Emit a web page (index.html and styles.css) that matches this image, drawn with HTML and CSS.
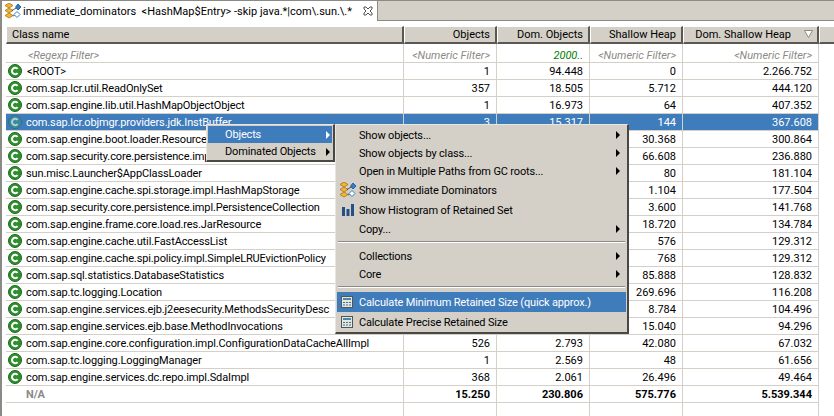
FILE: index.html
```html
<!DOCTYPE html>
<html lang="en">
<head>
  <meta charset="UTF-8" />
  <title>immediate_dominators</title>
  <link rel="stylesheet" href="styles.css">
</head>
<body>
  <svg class="defs" width="0" height="0">
    <symbol id="i-class" viewBox="0 0 14 14">
      <circle cx="7" cy="7" r="6.5" fill="#2f8f2f" stroke="#1d6b1d" stroke-width="1"/>
      <path d="M9.6 4.9A3.2 3.2 0 1 0 9.6 9.1" fill="none" stroke="#fff" stroke-width="2"/>
    </symbol>
    <symbol id="i-class-sel" viewBox="0 0 14 14">
      <circle cx="7" cy="7" r="6.5" fill="#3f8a9a" stroke="#2f6f86" stroke-width="1"/>
      <path d="M9.6 4.9A3.2 3.2 0 1 0 9.6 9.1" fill="none" stroke="#a9cfe0" stroke-width="2"/>
    </symbol>
    <symbol id="i-dominators" viewBox="0 0 18 16">
      <path d="M5 0l4 2.5-4 2.5-4-2.500z" fill="#f2b632" stroke="#a8741a" stroke-width=".8"/>
      <path d="M5 5l4 2.5-4 2.500-4-2.500z" fill="#f2b632" stroke="#a8741a" stroke-width=".8"/>
      <path d="M5 10l4 2.500-4 2.500-4-2.500z" fill="#f2b632" stroke="#a8741a" stroke-width=".8"/>
      <path d="M8 7.500L14 4M9 13l4-2" fill="none" stroke="#333" stroke-width=".8"/>
      <path d="M14 1l3 3-3 3-2.500-3z" fill="#2f7fd0" stroke="#1c4f8a" stroke-width=".8"/>
      <path d="M13 8.500l3 3-3 3-3-3z" fill="#fff" stroke="#2f7fd0" stroke-width="1"/>
    </symbol>
    <symbol id="i-histogram" viewBox="0 0 12 12">
      <path d="M0 3h3v9H0zM4.500 5h3v7h-3zM9 0h3v12H9z" fill="#254f86"/>
    </symbol>
    <symbol id="i-calc" viewBox="0 0 12 12">
      <rect x=".5" y=".5" width="11" height="11" fill="#e4e8dc" stroke="#555"/>
      <rect x="2" y="2" width="8" height="2" fill="#4f86b0"/>
      <path d="M2 6h2v1H2zM5 6h2v1H5zM8 6h2v1H8zM2 8.500h2v1H2zM5 8.500h2v1H5zM8 8.500h2v1H8z" fill="#3d6f99"/>
    </symbol>
  </svg>

  <div class="view">
    <!-- Editor tab -->
    <div class="tabbar">
      <div class="tab">
        <svg class="tab-icon"><use href="#i-dominators"/></svg>
        <span class="tab-title">immediate_dominators &nbsp;&lt;HashMap$Entry&gt; -skip java.*|com\.sun.\.*</span>
        <svg class="tab-close" viewBox="0 0 10 10"><path d="M1 1h2l2 2 2-2h2v2L7 5l2 2v2H7L5 7 3 9H1V7l2-2-2-2z" fill="#fff" stroke="#555"/></svg>
      </div>
    </div>

    <div class="table-pane">
      <table class="tree">
        <colgroup>
          <col class="c-name"><col class="c-num"><col class="c-num"><col class="c-num"><col class="c-last"><col>
        </colgroup>
        <thead>
          <tr>
            <th class="left">Class name</th>
            <th>Objects</th>
            <th>Dom. Objects</th>
            <th>Shallow Heap</th>
            <th class="sorted">Dom. Shallow Heap<svg class="sort" viewBox="0 0 9 8"><path d="M.5.500h8L4.500 7.500z" fill="#fff" stroke="#8c8a84"/></svg></th>
            <th class="filler"></th>
          </tr>
        </thead>
        <tbody>
          <tr class="filter">
            <td class="name regexp">&lt;Regexp Filter&gt;</td>
            <td>&lt;Numeric Filter&gt;</td>
            <td class="active">2000..</td>
            <td>&lt;Numeric Filter&gt;</td>
            <td>&lt;Numeric Filter&gt;</td>
            <td class="blank"></td>
          </tr>
          <tr><td class="name root"><svg class="ico"><use href="#i-class"/></svg>&lt;ROOT&gt;</td><td>1</td><td>94.448</td><td>0</td><td>2.266.752</td><td class="blank"></td></tr>
          <tr><td class="name"><svg class="ico"><use href="#i-class"/></svg>com.sap.lcr.util.ReadOnlySet</td><td>357</td><td>18.505</td><td>5.712</td><td>444.120</td><td class="blank"></td></tr>
          <tr><td class="name"><svg class="ico"><use href="#i-class"/></svg>com.sap.engine.lib.util.HashMapObjectObject</td><td>1</td><td>16.973</td><td>64</td><td>407.352</td><td class="blank"></td></tr>
          <tr class="selected"><td class="name"><svg class="ico"><use href="#i-class-sel"/></svg>com.sap.lcr.objmgr.providers.jdk.InstBuffer</td><td>3</td><td>15.317</td><td>144</td><td>367.608</td><td class="blank"></td></tr>
          <tr><td class="name"><svg class="ico"><use href="#i-class"/></svg>com.sap.engine.boot.loader.Resource</td><td></td><td></td><td>30.368</td><td>300.864</td><td class="blank"></td></tr>
          <tr><td class="name"><svg class="ico"><use href="#i-class"/></svg>com.sap.security.core.persistence.impl</td><td></td><td></td><td>66.608</td><td>236.880</td><td class="blank"></td></tr>
          <tr><td class="name"><svg class="ico"><use href="#i-class"/></svg>sun.misc.Launcher$AppClassLoader</td><td></td><td></td><td>80</td><td>181.104</td><td class="blank"></td></tr>
          <tr><td class="name"><svg class="ico"><use href="#i-class"/></svg>com.sap.engine.cache.spi.storage.impl.HashMapStorage</td><td></td><td></td><td>1.104</td><td>177.504</td><td class="blank"></td></tr>
          <tr><td class="name"><svg class="ico"><use href="#i-class"/></svg>com.sap.security.core.persistence.impl.PersistenceCollection</td><td></td><td></td><td>3.600</td><td>141.768</td><td class="blank"></td></tr>
          <tr><td class="name"><svg class="ico"><use href="#i-class"/></svg>com.sap.engine.frame.core.load.res.JarResource</td><td></td><td></td><td>18.720</td><td>134.784</td><td class="blank"></td></tr>
          <tr><td class="name"><svg class="ico"><use href="#i-class"/></svg>com.sap.engine.cache.util.FastAccessList</td><td></td><td></td><td>576</td><td>129.312</td><td class="blank"></td></tr>
          <tr><td class="name"><svg class="ico"><use href="#i-class"/></svg>com.sap.engine.cache.spi.policy.impl.SimpleLRUEvictionPolicy</td><td></td><td></td><td>768</td><td>129.312</td><td class="blank"></td></tr>
          <tr><td class="name"><svg class="ico"><use href="#i-class"/></svg>com.sap.sql.statistics.DatabaseStatistics</td><td></td><td></td><td>85.888</td><td>128.832</td><td class="blank"></td></tr>
          <tr><td class="name"><svg class="ico"><use href="#i-class"/></svg>com.sap.tc.logging.Location</td><td></td><td></td><td>269.696</td><td>116.208</td><td class="blank"></td></tr>
          <tr><td class="name"><svg class="ico"><use href="#i-class"/></svg>com.sap.engine.services.ejb.j2eesecurity.MethodsSecurityDesc</td><td></td><td></td><td>8.784</td><td>104.496</td><td class="blank"></td></tr>
          <tr><td class="name"><svg class="ico"><use href="#i-class"/></svg>com.sap.engine.services.ejb.base.MethodInvocations</td><td></td><td></td><td>15.040</td><td>94.296</td><td class="blank"></td></tr>
          <tr><td class="name"><svg class="ico"><use href="#i-class"/></svg>com.sap.engine.core.configuration.impl.ConfigurationDataCacheAllImpl</td><td>526</td><td>2.793</td><td>42.080</td><td>67.032</td><td class="blank"></td></tr>
          <tr><td class="name"><svg class="ico"><use href="#i-class"/></svg>com.sap.tc.logging.LoggingManager</td><td>1</td><td>2.569</td><td>48</td><td>61.656</td><td class="blank"></td></tr>
          <tr><td class="name"><svg class="ico"><use href="#i-class"/></svg>com.sap.engine.services.dc.repo.impl.SdaImpl</td><td>368</td><td>2.061</td><td>26.496</td><td>49.464</td><td class="blank"></td></tr>
          <tr class="total"><td class="name na">N/A</td><td>15.250</td><td>230.806</td><td>575.776</td><td>5.539.344</td><td class="blank"></td></tr>
          <tr class="empty"><td></td><td></td><td></td><td></td><td></td><td class="blank"></td></tr>
        </tbody>
      </table>
    </div>
  </div>

  <!-- Context menu and its submenu -->
  <div class="menu menu-root">
    <div class="item hot"><span>Objects</span><i class="arrow"></i></div>
    <div class="item"><span>Dominated Objects</span><i class="arrow"></i></div>
  </div>

  <div class="menu menu-sub">
    <div class="item"><span>Show objects...</span><i class="arrow"></i></div>
    <div class="item"><span>Show objects by class...</span><i class="arrow"></i></div>
    <div class="item"><span>Open in Multiple Paths from GC roots...</span><i class="arrow"></i></div>
    <div class="item tall"><svg class="mi mi-dom"><use href="#i-dominators"/></svg><span>Show immediate Dominators</span></div>
    <div class="item tall"><svg class="mi mi-hist"><use href="#i-histogram"/></svg><span>Show Histogram of Retained Set</span></div>
    <div class="item"><span>Copy...</span><i class="arrow"></i></div>
    <div class="sep"></div>
    <div class="item"><span>Collections</span><i class="arrow"></i></div>
    <div class="item"><span>Core</span><i class="arrow"></i></div>
    <div class="sep"></div>
    <div class="item tall hot"><svg class="mi mi-calc"><use href="#i-calc"/></svg><span>Calculate Minimum Retained Size (quick approx.)</span></div>
    <div class="item tall"><svg class="mi mi-calc"><use href="#i-calc"/></svg><span>Calculate Precise Retained Size</span></div>
  </div>
</body>
</html>
```

FILE: styles.css
```css
html, body { margin:0; padding:0; height:100%; }
body {
  width:834px;
  height:416px;
  position:relative;
  overflow:hidden;
  background:#fff;
  font-family:Roboto, "Liberation Sans", sans-serif;
  font-size:11px;
  color:#000;
}
.defs { position:absolute; }

.view {
  height:416px;
  display:flex;
  flex-direction:column;
  border-left:2px solid #8c8a84;
  box-sizing:border-box;
}

/* Tab bar */
.tabbar {
  height:21px;
  flex:none;
  box-sizing:border-box;
  background:#d4d0c8;
  border-top:1px solid #8c8a84;
  border-bottom:1px solid #8c8a84;
  display:flex;
}
.tab {
  width:376px;
  height:20px;
  box-sizing:border-box;
  background:#fff;
  border-right:1px solid #8c8a84;
  display:flex;
  align-items:center;
  padding-left:2px;
}
.tab-icon { width:18px; height:16px; flex:none; }
.tab-title { margin-left:1px; white-space:pre; }
.tab-close { width:10px; height:10px; margin-left:auto; margin-right:4px; flex:none; }

/* Table */
.table-pane { flex:1; padding:5px 0 0 4px; min-height:0; }
.tree {
  border-collapse:separate;
  border-spacing:0;
  table-layout:fixed;
  width:828px;
}
.c-name { width:398px; }
.c-num { width:93px; }
.c-last { width:136px; }
.tree th {
  height:18px;
  padding:0 5px 0 0;
  box-sizing:border-box;
  background:#d4d0c8;
  font-weight:normal;
  text-align:right;
  white-space:nowrap;
  border-top:1px solid #fff;
  border-left:1px solid #fff;
  border-right:2px solid #5a5853;
  border-bottom:2px solid #5a5853;
}
.tree th.left { text-align:left; padding-left:5px; }
.tree th.sorted { position:relative; padding-right:26px; }
.tree th.filler { border-right:none; padding:0; }
.sort { position:absolute; right:4px; top:3px; width:9px; height:8px; }
.tree td {
  height:17px;
  padding:0 6px 0 0;
  box-sizing:border-box;
  text-align:right;
  white-space:nowrap;
  overflow:hidden;
  border-right:1px solid #d4d0c8;
  border-bottom:1px solid #d4d0c8;
}
.tree td.name { text-align:left; padding-left:2px; letter-spacing:-.12px; }
.tree td.blank { border:none; }
.ico { width:14px; height:14px; margin-right:4px; vertical-align:-3px; }
.root .ico { margin-right:5px; }
.filter td { color:#8c8a84; font-style:italic; height:19px; padding-top:4px; }
.filter td.regexp { padding-left:22px; }
.filter td.active { color:#008000; }
.selected td { background:#3f7cbc; color:#fff; }
.selected td.blank { background:#fff; }
.total td { font-weight:bold; }
.total td.na { color:#8c8a84; padding-left:20px; }
.tree tr.empty td { height:14px; border-bottom:none; }

/* Menus */
.menu {
  position:absolute;
  box-sizing:border-box;
  background:#d4d0c8;
  border-top:1px solid #e8e6e1;
  border-left:1px solid #e8e6e1;
  border-right:2px solid #4a4844;
  border-bottom:2px solid #4a4844;
  letter-spacing:-.16px;
}
.menu-root { left:206px; top:124px; width:129px; height:38px; padding:1px 1px 0; }
.menu-sub { left:335px; top:124px; width:294px; height:210px; padding:1px; }
.item {
  display:flex;
  align-items:center;
  height:18px;
  position:relative;
  white-space:nowrap;
}
.menu-root .item { height:17px; padding-left:17px; }
.menu-sub .item { padding-left:22px; }
.menu-sub .item.tall { height:20px; }
.item.hot { background:#3f7cbc; color:#fff; }
.arrow {
  position:absolute;
  top:50%;
  margin-top:-4px;
  width:0;
  height:0;
  border-left:4px solid #000;
  border-top:4px solid transparent;
  border-bottom:4px solid transparent;
}
.menu-root .arrow { right:2px; }
.menu-sub .arrow { right:6px; }
.item.hot .arrow { border-left-color:#fff; }
.sep {
  margin:3px 1px 4px;
  height:0;
  border-top:1px solid #8c8a84;
  border-bottom:1px solid #fff;
}
.mi { position:absolute; }
.mi-dom { width:18px; height:16px; left:2px; top:2px; }
.mi-hist { width:12px; height:12px; left:5px; top:4px; }
.mi-calc { width:12px; height:12px; left:4px; top:4px; }
```
